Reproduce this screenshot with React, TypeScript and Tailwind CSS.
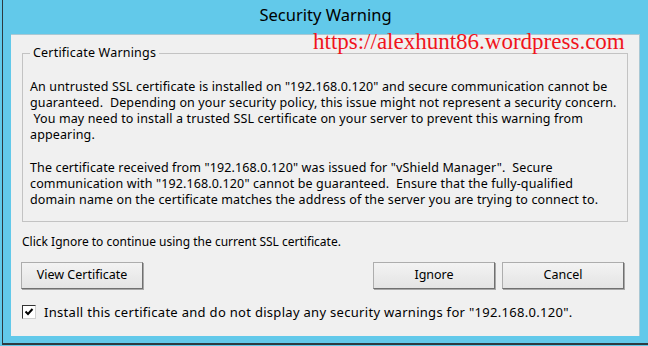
import React from 'react';

const font = "font-['Noto_Sans',sans-serif] text-black";
const body = `${font} text-[12.5px] leading-[16px] tracking-[0.13px]`;

function WinButton({ label, className = '' }: { label: string; className?: string }) {
  return (
    <button
      type="button"
      className={`h-[27px] w-[122px] border border-[#adadad] border-r-[#707070] border-b-[#707070] bg-gradient-to-b from-[#f3f3f3] to-[#e4e4e4] shadow-[1px_1px_0_#a8a8a8] ${font} text-[12.5px] ${className}`}
    >
      {label}
    </button>
  );
}

export default function App() {
  return (
    <div className="relative h-[346px] w-[648px] overflow-hidden bg-[#62c9ea]">
      <div className="ml-[2px] flex h-[345px] flex-col border-l border-b-2 border-[#2d3a40] pl-[8px] pr-[8px]">
        {/* title bar */}
        <div className={`flex h-[34px] items-center justify-center pb-[3px] ${font} text-[16.5px]`}>
          Security Warning
        </div>

        {/* client area */}
        <div className="flex h-[302px] flex-col border-t border-r border-[#a9c8d4] bg-[#f0f0f0] px-[11px]">
          <fieldset className="mt-[10px] border border-[#c3c3c3] px-[7px] pb-[13px]">
            <legend className={`ml-0 px-[3px] ${font} text-[12.5px] leading-[16px] tracking-[0.2px]`}>
              Certificate Warnings
            </legend>
            <p className={`mt-[18px] whitespace-nowrap ${body}`}>
              An untrusted SSL certificate is installed on "192.168.0.120" and secure communication cannot be
              <br />
              guaranteed.&nbsp; Depending on your security policy, this issue might not represent a security concern.
              <br />
              &nbsp;You may need to install a trusted SSL certificate on your server to prevent this warning from
              <br />
              appearing.
            </p>
            <p className={`mt-[17px] whitespace-nowrap ${body}`}>
              The certificate received from "192.168.0.120" was issued for "vShield Manager".&nbsp; Secure
              <br />
              communication with "192.168.0.120" cannot be guaranteed.&nbsp; Ensure that the fully-qualified
              <br />
              domain name on the certificate matches the address of the server you are trying to connect to.
            </p>
          </fieldset>

          <p className={`mt-[12px] ${font} text-[12px] leading-[16px]`}>
            Click Ignore to continue using the current SSL certificate.
          </p>

          <div className="mt-[12px] flex items-center">
            <WinButton label="View Certificate" className="-ml-[1px]" />
            <div className="ml-auto flex gap-[7px] pr-[4px]">
              <WinButton label="Ignore" />
              <WinButton label="Cancel" />
            </div>
          </div>

          <label className={`mt-[15px] flex items-center gap-[8px] ${font} text-[13px] leading-[16px] tracking-[0.3px]`}>
            <span className="flex h-[14px] w-[14px] items-center justify-center border border-[#333] border-r-[#d0d0d0] border-b-[#d0d0d0] bg-white">
              <svg width="10" height="10" viewBox="0 0 10 10">
                <polyline points="1.5,4.5 4,7 8.5,2" fill="none" stroke="#000" strokeWidth="2" />
              </svg>
            </span>
            Install this certificate and do not display any security warnings for "192.168.0.120".
          </label>
        </div>
      </div>

      {/* watermark */}
      <div className="absolute left-[313px] top-[29px] font-['Liberation_Serif',serif] text-[23px] leading-[26px] text-[#f0141c]">
        https://alexhunt86.wordpress.com
      </div>
    </div>
  );
}
